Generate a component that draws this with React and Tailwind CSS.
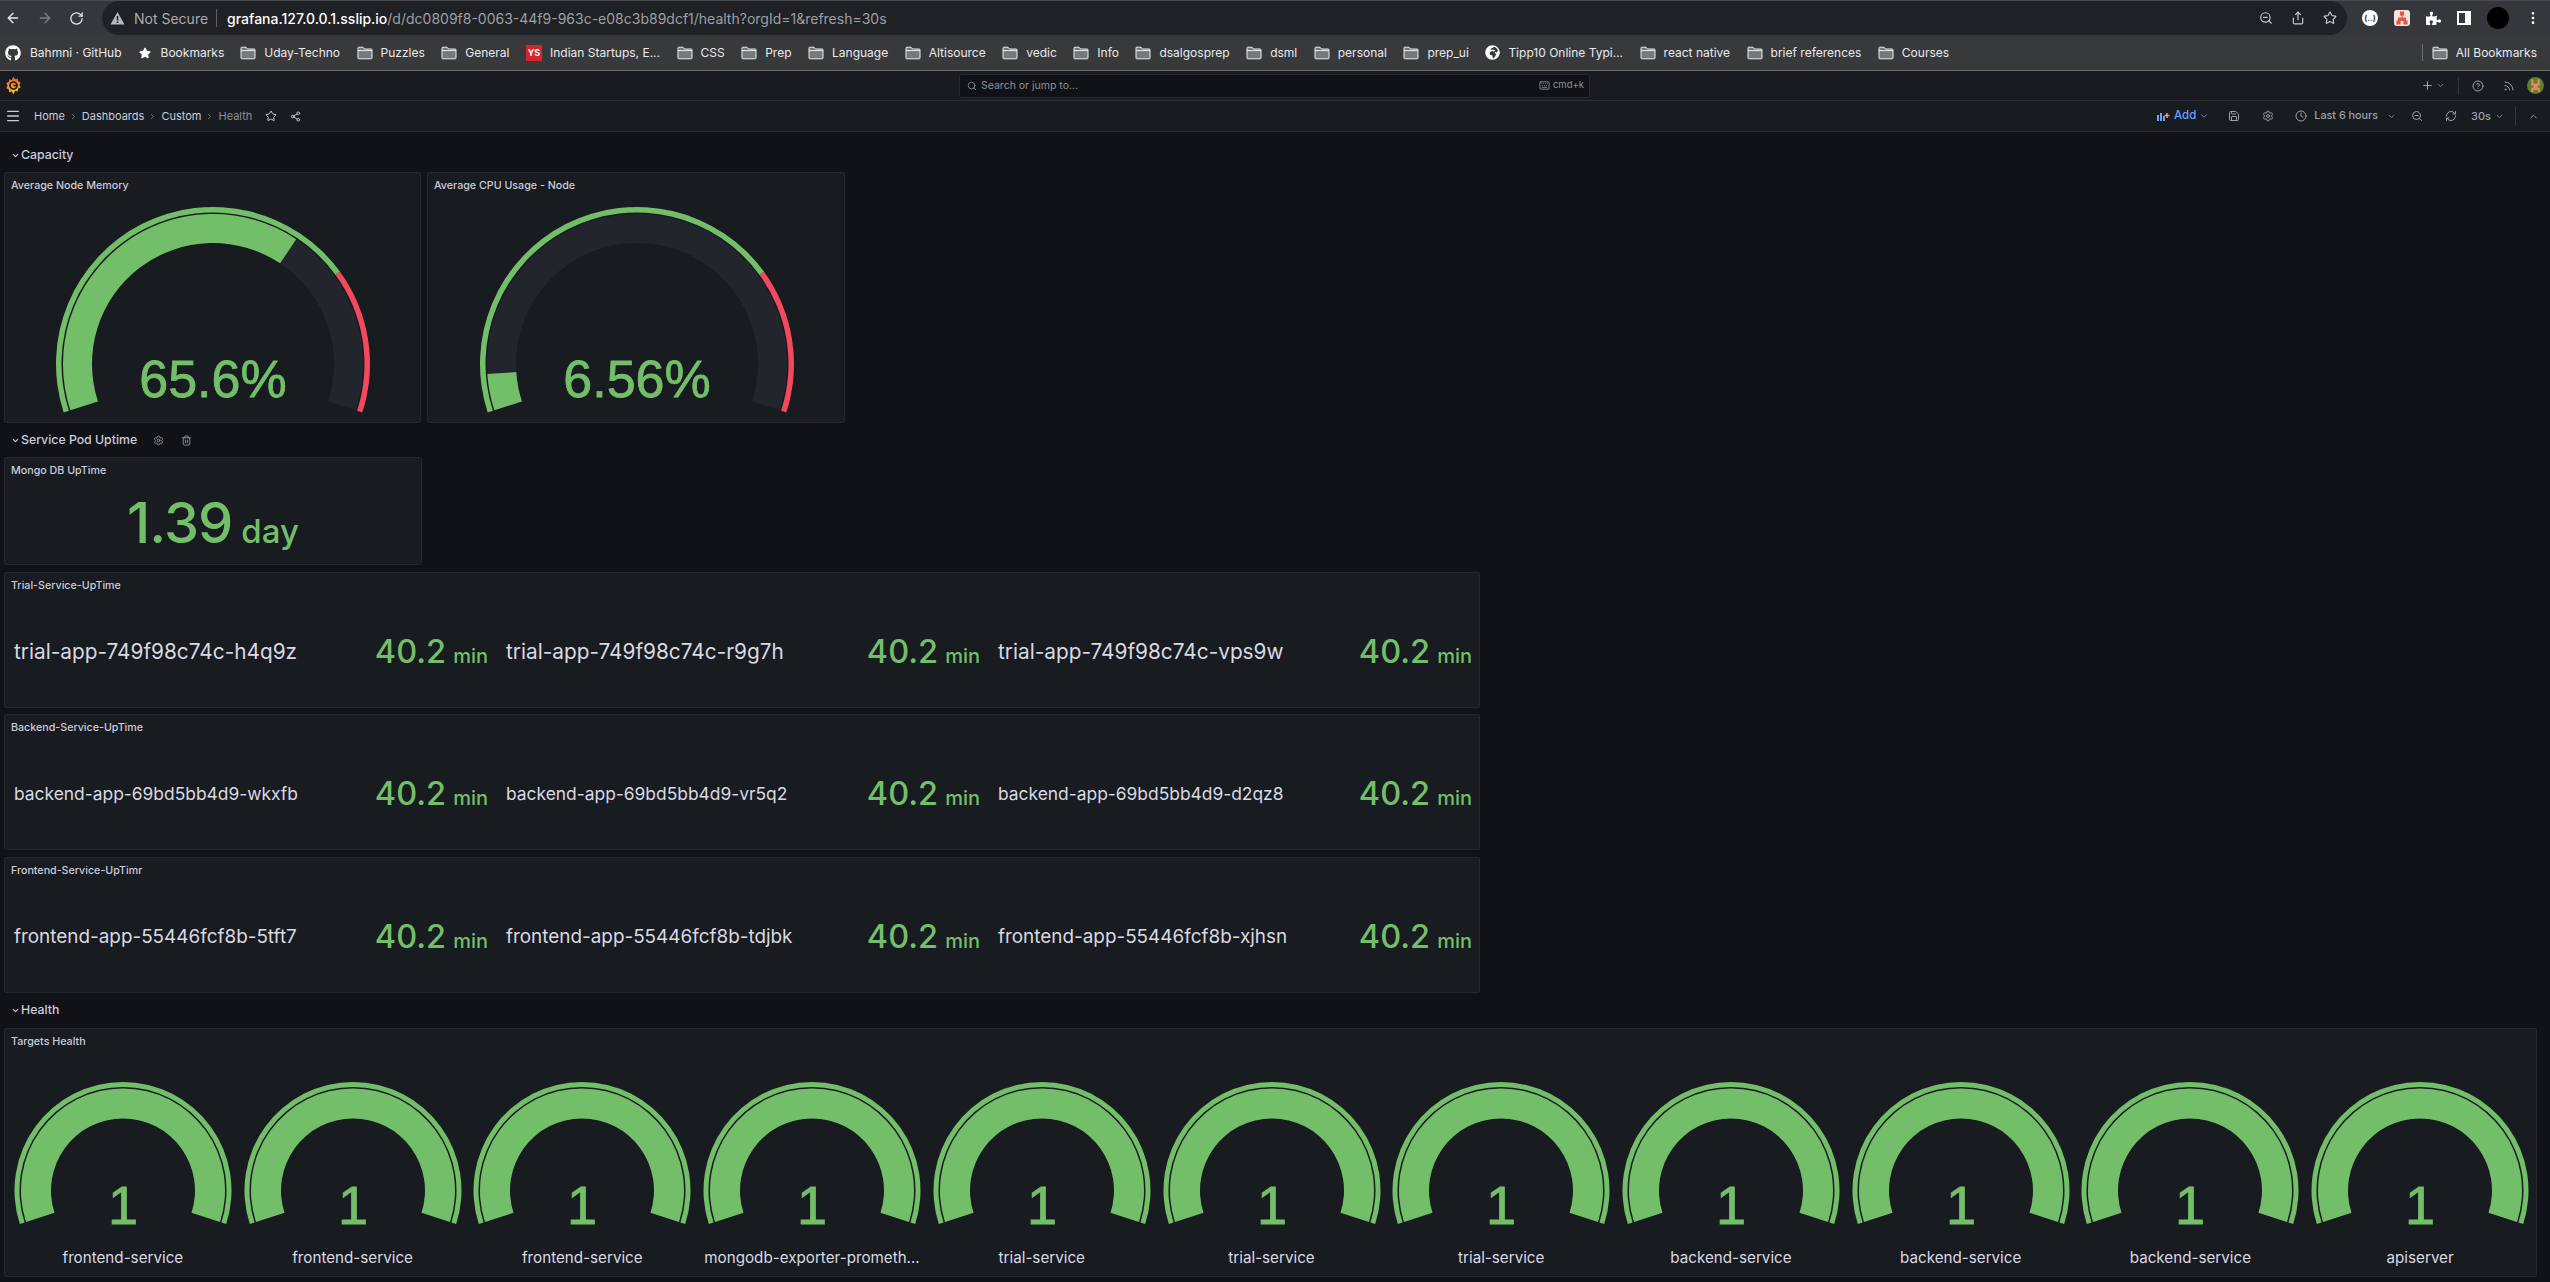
import { ArrowLeft, ArrowRight, RotateCw, ZoomOut, Share, Star, MoreVertical, Menu, ChevronDown, ChevronUp, ChevronRight, Share2, Plus, CircleHelp, Rss, Save, Settings, Clock, RefreshCw, Trash2, Search, Keyboard } from 'lucide-react';
import { FaGithub, FaPuzzlePiece, FaGlobeAfrica, FaStar } from 'react-icons/fa';

const bookmarks = [
  { name: 'Uday-Techno' }, { name: 'Puzzles' }, { name: 'General' },
  { name: 'Indian Startups, E...', icon: 'ys' },
  { name: 'CSS' }, { name: 'Prep' }, { name: 'Language' }, { name: 'Altisource' }, { name: 'vedic' },
  { name: 'Info' }, { name: 'dsalgosprep' }, { name: 'dsml' }, { name: 'personal' }, { name: 'prep_ui' },
  { name: 'Tipp10 Online Typi...', icon: 'globe' },
  { name: 'react native' }, { name: 'brief references' }, { name: 'Courses' },
];

const targets = [
  'frontend-service', 'frontend-service', 'frontend-service', 'mongodb-exporter-prometh...',
  'trial-service', 'trial-service', 'trial-service',
  'backend-service', 'backend-service', 'backend-service', 'apiserver',
];

// the stat panel shrinks the names so they fit, so each row has its own size
const uptimeRows = [
  { title: 'Trial-Service-UpTime', mt: 'mt-[7px]', nameSize: 'text-[20.8px]', names: ['trial-app-749f98c74c-h4q9z', 'trial-app-749f98c74c-r9g7h', 'trial-app-749f98c74c-vps9w'] },
  { title: 'Backend-Service-UpTime', mt: 'mt-[6px]', nameSize: 'text-[17.4px]', names: ['backend-app-69bd5bb4d9-wkxfb', 'backend-app-69bd5bb4d9-vr5q2', 'backend-app-69bd5bb4d9-d2qz8'] },
  { title: 'Frontend-Service-UpTimr', mt: 'mt-[7px]', nameSize: 'text-[18.9px]', names: ['frontend-app-55446fcf8b-5tft7', 'frontend-app-55446fcf8b-tdjbk', 'frontend-app-55446fcf8b-xjhsn'] },
];

// gauge sweeps 216deg, from 18deg under the left horizontal to 18deg under the right
const polar = (cx, cy, r, frac) => {
  const a = ((198 - 216 * frac) * Math.PI) / 180;
  return [cx + r * Math.cos(a), cy - r * Math.sin(a)];
};

const arcPath = (cx, cy, r0, r1, from, to) => {
  const large = (to - from) * 216 > 180 ? 1 : 0;
  const [x1, y1] = polar(cx, cy, r1, from);
  const [x2, y2] = polar(cx, cy, r1, to);
  const [x3, y3] = polar(cx, cy, r0, to);
  const [x4, y4] = polar(cx, cy, r0, from);
  return `M${x1} ${y1}A${r1} ${r1} 0 ${large} 1 ${x2} ${y2}L${x3} ${y3}A${r0} ${r0} 0 ${large} 0 ${x4} ${y4}Z`;
};

function Gauge({ w, h, cx, cy, rings, value, threshold, text, fontSize, textY }) {
  const [tr0, tr1, r0, r1] = rings;
  return (
    <svg width={w} height={h} viewBox={`0 0 ${w} ${h}`} className="block">
      <path d={arcPath(cx, cy, r0, r1, 0, 1)} fill="#22252b" />
      <path d={arcPath(cx, cy, r0, r1, 0, value)} fill="#73bf69" />
      <path d={arcPath(cx, cy, tr0, tr1, 0, threshold)} fill="#73bf69" />
      {threshold < 1 && <path d={arcPath(cx, cy, tr0, tr1, threshold, 1)} fill="#f2495c" />}
      <text x={cx} y={textY} textAnchor="middle" fill="#73bf69" stroke="#73bf69" strokeWidth="0.8" fontSize={fontSize} className="font-['Liberation_Sans',sans-serif]">{text}</text>
    </svg>
  );
}

function FolderIcon() {
  return (
    <svg width="16" height="14" viewBox="0 0 16 14" className="shrink-0">
      <path d="M1 2A.8.8 0 0 1 1.800 1.200H6L7.500 3H14.200A.8.8 0 0 1 15 3.800V12A.8.8 0 0 1 14.200 12.800H1.800A.8.8 0 0 1 1 12z" fill="#77787b" stroke="#eceef0" strokeWidth="1" />
      <path d="M1 4.600h14" stroke="#eceef0" strokeWidth="1" />
    </svg>
  );
}

function GrafanaLogo() {
  return (
    <svg width="17" height="19" viewBox="0 0 24 27">
      <defs>
        <linearGradient id="gf" x1="0" y1="1" x2="0" y2="0">
          <stop offset="0" stopColor="#f9c80e" />
          <stop offset="1" stopColor="#ef5a24" />
        </linearGradient>
      </defs>
      <path d="M12 1l2.500 3.600 3.600-1.100.6 4.100 3.500 1.500-1.800 3.600 1.800 3.700-3.500 1.500-.6 4.100-3.600-1.100L12 26l-2.500-4.100-3.600 1.100-.6-4.100-3.500-1.500 1.800-3.700-1.800-3.600 3.500-1.500.6-4.100 3.600 1.100z" fill="url(#gf)" />
      <circle cx="12" cy="13.500" r="5" fill="none" stroke="#181b1f" strokeWidth="2.400" />
      <path d="M12 13.500h5" stroke="#181b1f" strokeWidth="2.200" />
    </svg>
  );
}

function SectionRow({ title, className, children }) {
  return (
    <div className={`flex items-center pl-[7px] text-[12.3px] font-medium text-[#ccccdc] ${className}`}>
      <ChevronDown size={9} strokeWidth={3} className="mr-[1px]" />
      <span>{title}</span>
      {children}
    </div>
  );
}

function Panel({ title, className, children }) {
  return (
    <div className={`flex flex-col border border-[#24272d] bg-[#181b1f] rounded-[2px] ${className}`}>
      <div className="h-[24px] shrink-0 pl-[6px] pt-[5px] text-[10.7px] leading-[16px] font-medium text-[#ccccdc]">{title}</div>
      {children}
    </div>
  );
}

export default function App() {
  return (
    <div className="flex flex-col w-[2550px] h-[1282px] overflow-hidden bg-[#111217] font-['Inter',sans-serif]">
      {/* browser toolbar */}
      <div className="flex items-center h-[35px] shrink-0 bg-[#36373a] border-t border-[#4a4b4e]">
        <div className="flex items-center w-[102px] pl-[5px] gap-[16px] text-[#e8eaed]">
          <ArrowLeft size={16} />
          <ArrowRight size={16} className="text-[#808184]" />
          <RotateCw size={15} />
        </div>
        <div className="flex items-center w-[2245px] h-[34px] rounded-full bg-[#202124] pl-[8px] text-[14px]">
          <svg width="15" height="14" viewBox="0 0 15 14">
            <path d="M7.500 1L14.500 13.500H.5z" fill="#b5b8bb" />
            <path d="M7.500 5v4.500M7.500 10.500v1.500" stroke="#202124" strokeWidth="1.500" />
          </svg>
          <span className="ml-[9px] text-[#a8abaf]">Not Secure</span>
          <span className="ml-[8px] mr-[10px] w-px h-[18px] bg-[#5f6165]" />
          <span className="text-white font-medium">grafana.127.0.0.1.sslip.io</span>
          <span className="text-[#9aa0a6]">/d/dc0809f8-0063-44f9-963c-e08c3b89dcf1/health?orgId=1&refresh=30s</span>
          <div className="flex items-center ml-auto mr-[10px] gap-[18px] text-[#c9cbce]">
            <ZoomOut size={14} />
            <Share size={14} />
            <Star size={14} />
          </div>
        </div>
        <div className="flex items-center pl-[15px] gap-[16px]">
          <span className="flex items-center justify-center w-[16px] h-[16px] rounded-full bg-white text-[8px] font-bold text-[#333]">(..)</span>
          <svg width="16" height="16" viewBox="0 0 16 16">
            <rect width="16" height="16" rx="3" fill="#f3e4df" />
            <path d="M6.500 2h3v3h-3zM3 11h3v3H3zM10 11h3v3h-3zM8 5v3M4.500 11V8h7v3" fill="#e8563f" stroke="#e8563f" strokeWidth="1.100" />
          </svg>
          <FaPuzzlePiece size={15} className="text-white" />
          <span className="w-[14px] h-[14px] border-[2px] border-r-[6px] border-white" />
          <span className="w-[22px] h-[22px] rounded-full bg-black" />
          <MoreVertical size={16} className="text-white" />
        </div>
      </div>

      {/* bookmarks bar */}
      <div className="flex items-center h-[36px] shrink-0 pl-[5px] bg-[#38393b] border-b border-[#6b6c6e] text-[12px] text-[#e8eaed]">
        <FaGithub size={16} className="text-white mr-[9px]" />
        <span>Bahmni · GitHub</span>
        <FaStar size={12} className="text-white ml-[17px] mr-[10px]" />
        <span>Bookmarks</span>
        <div className="flex items-center gap-[16.5px] ml-[16px]">
          {bookmarks.map((b, i) => (
            <div key={i} className="flex items-center gap-[8px] whitespace-nowrap">
              {b.icon === 'ys' && <span className="flex items-center justify-center w-[16px] h-[16px] bg-[#d8232a] text-[9px] font-bold text-white">YS</span>}
              {b.icon === 'globe' && <FaGlobeAfrica size={15} className="text-white" />}
              {!b.icon && <FolderIcon />}
              <span>{b.name}</span>
            </div>
          ))}
        </div>
        <div className="flex items-center gap-[8px] ml-auto mr-[13px] pl-[9px] border-l border-[#6b6c6e] h-[17px]">
          <FolderIcon />
          <span>All Bookmarks</span>
        </div>
      </div>

      {/* grafana top nav */}
      <div className="flex items-center h-[30px] shrink-0 pl-[5px] pr-[6px] bg-[#181b1f] border-b border-[#2a2d33]">
        <GrafanaLogo />
        <div className="flex items-center w-[631px] h-[24px] ml-[937px] pl-[7px] pr-[5px] bg-[#111217] border border-[#25282e] rounded-[2px] text-[10.5px] text-[#8e8f98]">
          <Search size={10} />
          <span className="ml-[4px]">Search or jump to...</span>
          <Keyboard size={11} className="ml-auto mr-[3px]" />
          <span className="text-[9.5px]">cmd+k</span>
        </div>
        <div className="flex items-center ml-auto text-[#9fa0a8]">
          <Plus size={13} />
          <ChevronDown size={9} className="ml-[2px]" />
          <span className="w-px h-[18px] bg-[#33363c] mx-[13px]" />
          <CircleHelp size={12} />
          <Rss size={12} className="ml-[19px]" />
          <svg width="17" height="17" viewBox="0 0 8 8" className="ml-[12px] rounded-full">
            <rect width="8" height="8" fill="#5f7f2a" />
            <path d="M2 1h1v2h2V1h1v3H5v1h1v2H5V6H3v1H2V5h1V4H2z" fill="#e58a6e" />
          </svg>
        </div>
      </div>

      {/* dashboard toolbar */}
      <div className="flex items-center h-[31px] shrink-0 pl-[5px] pr-[11px] bg-[#181b1f] border-b border-[#2a2d33] text-[11px] text-[#ccccdc]">
        <Menu size={16} className="text-[#ccccdc]" />
        <span className="ml-[13px]">Home</span>
        <ChevronRight size={9} className="mx-[4px] text-[#8e8f98]" />
        <span>Dashboards</span>
        <ChevronRight size={9} className="mx-[4px] text-[#8e8f98]" />
        <span>Custom</span>
        <ChevronRight size={9} className="mx-[4px] text-[#8e8f98]" />
        <span className="text-[#8e8f98]">Health</span>
        <Star size={12} className="ml-[13px]" />
        <Share2 size={11} className="ml-[13px]" />
        <div className="flex items-center ml-auto text-[#9fa0a8]">
          <svg width="14" height="12" viewBox="0 0 14 12">
            <path d="M1 5h2v6H1zM4 3h2v8H4zM7 6h2v5H7z" fill="#6e9fff" />
            <path d="M11 3v5M8.500 5.500h5" stroke="#ff9830" strokeWidth="1.500" />
          </svg>
          <span className="ml-[4px] font-medium text-[11.5px] text-[#6e9fff]">Add</span>
          <ChevronDown size={10} className="ml-[3px] text-[#6e9fff]" />
          <Save size={12} className="ml-[19px]" />
          <Settings size={12} className="ml-[22px]" />
          <Clock size={12} className="ml-[21px]" />
          <span className="ml-[7px] font-medium text-[10.8px]">Last 6 hours</span>
          <ChevronDown size={9} className="ml-[9px]" />
          <ZoomOut size={12} className="ml-[15px]" />
          <RefreshCw size={12} className="ml-[22px]" />
          <span className="ml-[14px] font-medium">30s</span>
          <ChevronDown size={9} className="ml-[4px]" />
          <span className="w-px h-[18px] bg-[#33363c] ml-[11px]" />
          <ChevronUp size={11} className="ml-[12px]" />
        </div>
      </div>

      {/* dashboard */}
      <div className="flex flex-col pl-[4px] pr-[13px]">
        <SectionRow title="Capacity" className="h-[40px] pt-[6px]" />
        <div className="flex gap-[6px]">
          <Panel title="Average Node Memory" className="w-[417px] h-[251px]">
            <Gauge w={415} h={225} cx={208} cy={167} rings={[151.5, 157, 121, 150]} value={0.656} threshold={0.75} text="65.6%" fontSize={52} textY={200} />
          </Panel>
          <Panel title="Average CPU Usage - Node" className="w-[418px] h-[251px]">
            <Gauge w={416} h={225} cx={209} cy={167} rings={[151.5, 157, 121, 150]} value={0.0656} threshold={0.75} text="6.56%" fontSize={52} textY={200} />
          </Panel>
        </div>

        <SectionRow title="Service Pod Uptime" className="h-[34px]">
          <Settings size={11} className="ml-[16px] text-[#8e8f98]" />
          <Trash2 size={11} className="ml-[17px] text-[#8e8f98]" />
        </SectionRow>
        <Panel title="Mongo DB UpTime" className="w-[418px] h-[108px]">
          <div className="flex items-baseline justify-center pt-[6px] text-[#73bf69] font-medium">
            <span className="text-[56px] leading-[70px] tracking-[-1px]">1.39</span>
            <span className="ml-[9px] text-[33px] leading-[40px]">day</span>
          </div>
        </Panel>

        {uptimeRows.map(row => (
          <Panel key={row.title} title={row.title} className={`w-[1476px] h-[136px] ${row.mt}`}>
            <div className="grid grid-cols-[repeat(3,492px)] flex-1 pl-[3px]">
              {row.names.map(n => (
                <div key={n} className="flex items-center justify-between pl-[6px] pr-[12px]">
                  <span className={`${row.nameSize} text-[#d8d9e3] whitespace-nowrap`}>{n}</span>
                  <span className="flex items-baseline font-medium text-[#73bf69] whitespace-nowrap">
                    <span className="text-[32.5px] leading-[40px]">40.2</span>
                    <span className="ml-[7px] text-[20px] leading-[24px]">min</span>
                  </span>
                </div>
              ))}
            </div>
          </Panel>
        ))}

        <SectionRow title="Health" className="h-[35px]" />
        <Panel title="Targets Health" className="w-[2533px] h-[249px]">
          <div className="grid grid-cols-11 pl-[3px] pr-[1px]">
            {targets.map((t, i) => (
              <div key={i} className="flex flex-col items-center min-w-0">
                <Gauge w={230} h={186} cx={115} cy={137.5} rings={[103.5, 108.5, 72, 102]} value={1} threshold={1} text="1" fontSize={54} textY={171} />
                <span className="h-[38px] leading-[38px] text-[15.2px] text-[#d8d9e3] whitespace-nowrap">{t}</span>
              </div>
            ))}
          </div>
        </Panel>
      </div>
    </div>
  );
}
